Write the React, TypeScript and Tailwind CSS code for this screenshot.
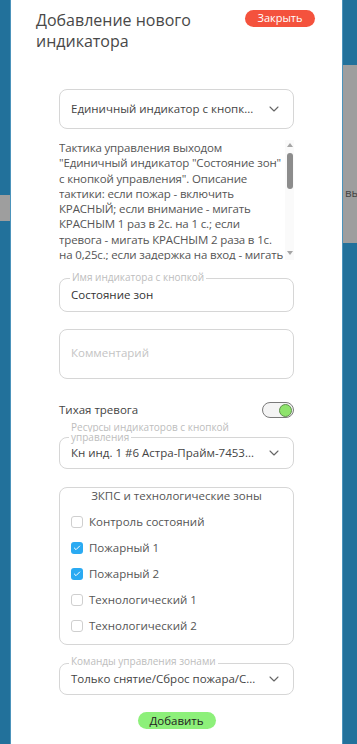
import { ChevronDown, Check } from "lucide-react";

const zones = [
    { name: "Контроль состояний", checked: false },
    { name: "Пожарный 1", checked: true },
    { name: "Пожарный 2", checked: true },
    { name: "Технологический 1", checked: false },
    { name: "Технологический 2", checked: false },
];

// строки тактики как в textarea
const tacticLines = [
    "Тактика управления выходом",
    '"Единичный индикатор "Состояние зон"',
    'с кнопкой управления". Описание',
    "тактики: если пожар - включить",
    "КРАСНЫЙ; если внимание - мигать",
    "КРАСНЫМ 1 раз в 2с. на 1 с.; если",
    "тревога - мигать КРАСНЫМ 2 раза в 1с.",
    "на 0,25с.; если задержка на вход - мигать",
    "КРАСНЫМ 1 раз в 1с. на 0,5с.",
];

function SelectBox({ value, height }: { value: string; height: string }) {
    return (
        <div className={`flex ${height} items-center justify-between rounded-[8px] border border-[#d6d6d6] pl-[11px] pr-[11px]`}>
            <span className="whitespace-nowrap text-[11.5px] text-[#444]">{value}</span>
            <ChevronDown className="h-4 w-4 shrink-0 text-[#666]" strokeWidth={1.6} />
        </div>
    );
}

function FloatLabel({ children }: { children: React.ReactNode }) {
    return (
        <span className="absolute -top-[8px] left-[10px] bg-white px-[2px] text-[10px] leading-[13px] text-[#bdbdbd]">
            {children}
        </span>
    );
}

export default function App() {
    return (
        <div className="flex h-[744px] w-full overflow-hidden bg-[#22719b] font-['Open_Sans',sans-serif]">
            <div className="flex w-[11px] shrink-0 flex-col border-r border-[#4c93bb]">
                <div className="h-[195px]" />
                <div className="h-[26px] bg-[#9e9e9e]" />
                <div className="flex-1" />
            </div>

            <div className="flex-1 bg-white">
                <div className="flex items-start justify-between pl-[25px] pr-[27px] pt-[10px]">
                    <h1 className="text-[16px] leading-[21px] text-[#484848]">
                        Добавление нового
                        <br />
                        индикатора
                    </h1>
                    <button className="flex h-[17px] w-[70px] items-center justify-center rounded-full bg-[#f4523d] text-[11px] text-white">
                        Закрыть
                    </button>
                </div>

                <div className="mx-auto w-[235px]">
                    <div className="mt-[37px]">
                        <SelectBox value="Единичный индикатор с кнопк..." height="h-[40px]" />
                    </div>

                    <div className="mt-[11px] flex h-[120px]">
                        <div className="flex-1 overflow-hidden text-[11.5px] leading-[15.3px] tracking-[-0.15px] text-[#555]">
                            {tacticLines.map((line) => (
                                <div key={line} className="whitespace-nowrap">
                                    {line}
                                </div>
                            ))}
                        </div>
                        <div className="flex w-[9px] shrink-0 flex-col items-center bg-[#fafafa]">
                            <div className="mt-[3px] h-0 w-0 border-x-[3px] border-b-[4px] border-x-transparent border-b-[#a5a5a5]" />
                            <div className="mt-[6px] h-[36px] w-[6px] rounded-full bg-[#8c8c8c]" />
                            <div className="flex-1" />
                            <div className="mb-[5px] h-0 w-0 border-x-[3px] border-t-[4px] border-x-transparent border-t-[#a5a5a5]" />
                        </div>
                    </div>

                    <div className="relative mt-[18px] flex h-[34px] items-center rounded-[8px] border border-[#d6d6d6] px-[11px]">
                        <FloatLabel>Имя индикатора с кнопкой</FloatLabel>
                        <span className="text-[11.5px] text-[#333]">Состояние зон</span>
                    </div>

                    <div className="mt-[17px] h-[50px] rounded-[8px] border border-[#d6d6d6] px-[11px] pt-[9px]">
                        <span className="text-[11.5px] text-[#c4c4c4]">Комментарий</span>
                    </div>

                    <div className="mt-[22px] flex h-[18px] items-center justify-between">
                        <span className="text-[11.5px] text-[#444]">Тихая тревога</span>
                        <div className="flex h-[16px] w-[32px] items-center justify-end rounded-full border-[1.5px] border-[#7a7a7a] bg-[#f4f4f4] pr-[1px]">
                            <div className="h-[13px] w-[13px] rounded-full border border-[#5f8f4c] bg-[#8ee36c]" />
                        </div>
                    </div>

                    <div className="relative mt-[18px]">
                        <div className="absolute -top-[15px] left-[10px] text-[10px] leading-[10px] text-[#bdbdbd]">
                            <div className="px-[2px]">Ресурсы индикаторов с кнопкой</div>
                            <div className="inline-block bg-white px-[2px]">управления</div>
                        </div>
                        <SelectBox value="Кн инд. 1 #6 Астра-Прайм-7453..." height="h-[32px]" />
                    </div>

                    <div className="mt-[18px] h-[158px] rounded-[8px] border border-[#d6d6d6]">
                        <div className="text-center text-[11.5px] leading-[16px] text-[#555]">ЗКПС и технологические зоны</div>
                        <div className="mt-[5px] flex flex-col">
                            {zones.map((z) => (
                                <label key={z.name} className="flex h-[26px] items-center gap-[6px] pl-[11px]">
                                    {z.checked ? (
                                        <span className="flex h-[12px] w-[12px] items-center justify-center rounded-[3px] bg-[#2aaaf2]">
                                            <Check className="h-[8px] w-[8px] text-white" strokeWidth={3} />
                                        </span>
                                    ) : (
                                        <span className="h-[12px] w-[12px] rounded-[3px] border border-[#cfcfcf] bg-white" />
                                    )}
                                    <span className="text-[11.5px] text-[#555]">{z.name}</span>
                                </label>
                            ))}
                        </div>
                    </div>

                    <div className="relative mt-[18px]">
                        <FloatLabel>Команды управления зонами</FloatLabel>
                        <SelectBox value="Только снятие/Сброс пожара/С..." height="h-[32px]" />
                    </div>

                    <div className="mt-[17px] flex justify-center">
                        <button className="flex h-[17px] w-[78px] items-center justify-center rounded-full bg-[#8df07a] text-[11.5px] text-[#222]">
                            Добавить
                        </button>
                    </div>
                </div>
            </div>

            <div className="flex w-[15px] shrink-0 flex-col border-l border-[#4c93bb]">
                <div className="h-[65px]" />
                <div className="flex h-[178px] flex-col overflow-hidden bg-[#9e9e9e] pl-[2px] pt-[120px]">
                    <span className="text-[11.5px] leading-[16px] text-[#444]">вы</span>
                </div>
                <div className="flex-1" />
            </div>
        </div>
    );
}
